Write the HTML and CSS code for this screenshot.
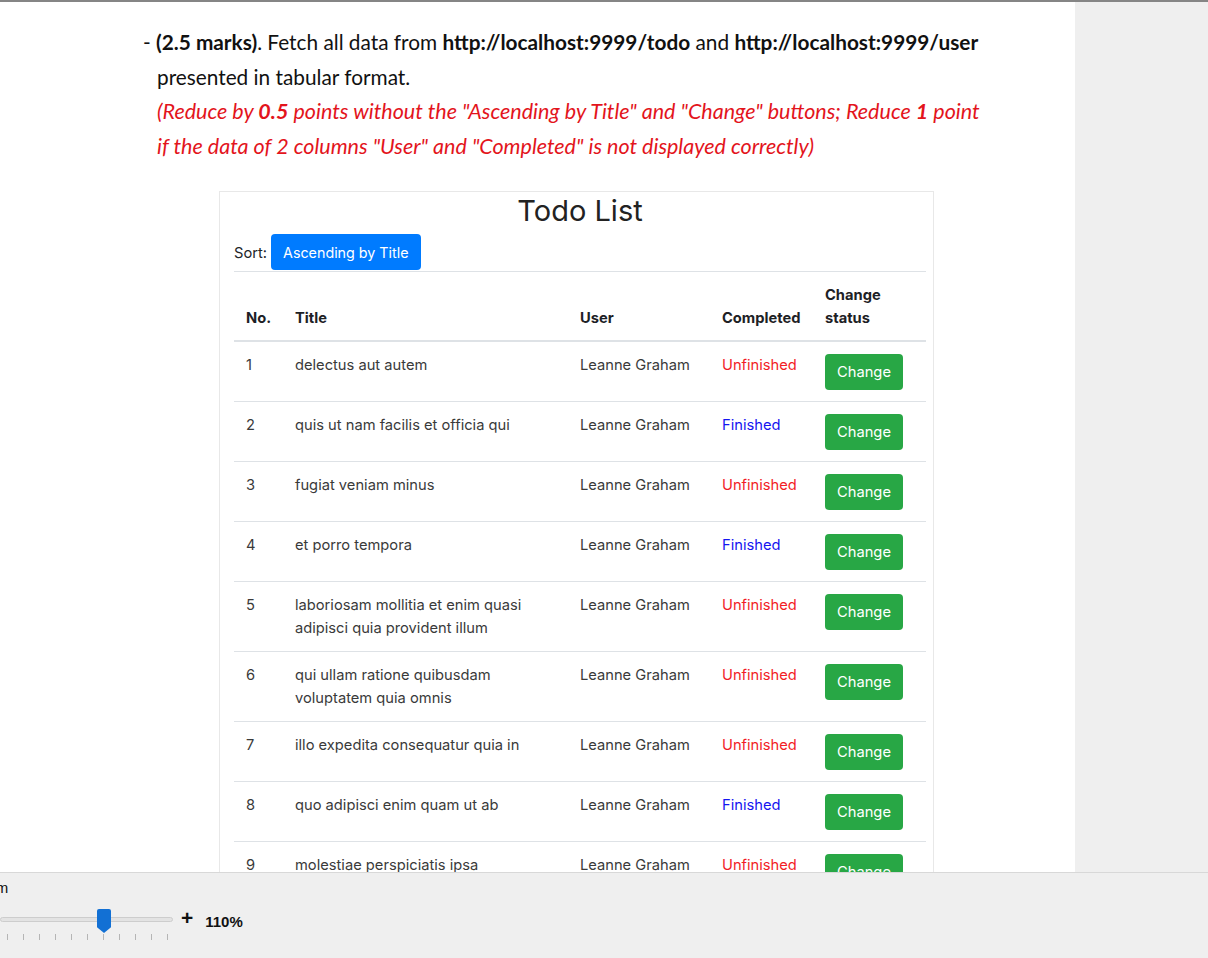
FILE: index.html
```html
<!DOCTYPE html>
<html lang="en">
<head>
<meta charset="utf-8">
<title>Todo List requirement</title>
<link rel="stylesheet" href="styles.css">
</head>
<body>
<div class="app">
  <div class="main">
    <div class="doc">
      <p class="req">
        <span class="line first">- <b>(2.5 marks)</b>. Fetch all data from <b>http://localhost:9999/todo</b> and <b>http://localhost:9999/user</b></span>
        <span class="line">presented in tabular format.</span>
        <span class="line note">(Reduce by <b>0.5</b> points without the "Ascending by Title" and "Change" buttons; Reduce <b>1</b> point</span>
        <span class="line note">if the data of 2 columns "User" and "Completed" is not displayed correctly)</span>
      </p>
      <div class="card">
        <h1 class="title">Todo List</h1>
        <div class="sort">
          <span>Sort:</span>
          <button class="btn btn-blue">Ascending by Title</button>
        </div>
        <table class="todo">
          <colgroup>
            <col class="c-no"><col class="c-title"><col class="c-user"><col class="c-done"><col class="c-act">
          </colgroup>
          <thead>
            <tr><th>No.</th><th>Title</th><th>User</th><th>Completed</th><th>Change status</th></tr>
          </thead>
          <tbody>
            <tr><td>1</td><td>delectus aut autem</td><td>Leanne Graham</td><td class="no">Unfinished</td><td><button class="btn btn-green">Change</button></td></tr>
            <tr><td>2</td><td>quis ut nam facilis et officia qui</td><td>Leanne Graham</td><td class="yes">Finished</td><td><button class="btn btn-green">Change</button></td></tr>
            <tr><td>3</td><td>fugiat veniam minus</td><td>Leanne Graham</td><td class="no">Unfinished</td><td><button class="btn btn-green">Change</button></td></tr>
            <tr><td>4</td><td>et porro tempora</td><td>Leanne Graham</td><td class="yes">Finished</td><td><button class="btn btn-green">Change</button></td></tr>
            <tr><td>5</td><td>laboriosam mollitia et enim quasi adipisci quia provident illum</td><td>Leanne Graham</td><td class="no">Unfinished</td><td><button class="btn btn-green">Change</button></td></tr>
            <tr><td>6</td><td>qui ullam ratione quibusdam voluptatem quia omnis</td><td>Leanne Graham</td><td class="no">Unfinished</td><td><button class="btn btn-green">Change</button></td></tr>
            <tr><td>7</td><td>illo expedita consequatur quia in</td><td>Leanne Graham</td><td class="no">Unfinished</td><td><button class="btn btn-green">Change</button></td></tr>
            <tr><td>8</td><td>quo adipisci enim quam ut ab</td><td>Leanne Graham</td><td class="yes">Finished</td><td><button class="btn btn-green">Change</button></td></tr>
            <tr><td>9</td><td>molestiae perspiciatis ipsa</td><td>Leanne Graham</td><td class="no">Unfinished</td><td><button class="btn btn-green">Change</button></td></tr>
          </tbody>
        </table>
      </div>
    </div>
    <div class="side"></div>
  </div>
  <div class="zoombar">
    <div class="zlabel">Zoom</div>
    <div class="zrow">
      <div class="track"><div class="thumb"></div></div>
      <span class="plus">+</span>
      <span class="pct">110%</span>
    </div>
    <div class="ticks">
      <i></i><i></i><i></i><i></i><i></i><i></i><i></i><i></i><i></i><i></i><i></i>
    </div>
  </div>
</div>
</body>
</html>
```

FILE: styles.css
```css
* { box-sizing: border-box; }
html, body { margin: 0; padding: 0; }
body { width: 1208px; height: 958px; overflow: hidden; background: #fff; }

.app { display: flex; flex-direction: column; height: 958px; }

.main {
  height: 872px;
  display: flex;
  overflow: hidden;
  border-top: 2px solid #858585;
}
.doc { width: 1075px; flex: none; background: #fff; }
.side { flex: 1; background: #efefef; }

.req {
  margin: 0;
  padding: 22px 0 0 157px;
  font-family: Lato, "Open Sans", sans-serif;
  font-size: 20.8px;
  line-height: 35px;
  color: #111;
}
.req .line { display: block; white-space: nowrap; }
.req .first { margin-left: -14px; }
.req b { font-weight: 700; }
.req .note { color: #e3141c; font-style: italic; font-size: 21.5px; }

.card {
  margin: 27px 0 0 219px;
  width: 715px;
  border: 1px solid #e8e8e8;
  border-bottom: none;
  padding: 0 7px 0 14px;
  font-family: Inter, "Open Sans", sans-serif;
  color: #212529;
}
.title {
  margin: 0 0 4px;
  text-align: center;
  font-size: 29px;
  font-weight: 400;
  line-height: 38px;
  color: #222;
}
.sort {
  display: flex;
  align-items: center;
  gap: 4px;
  font-size: 14.7px;
  height: 36px;
  border-bottom: 1px solid #dee2e6;
  box-sizing: content-box;
  padding-bottom: 1px;
}
.sort span { margin-top: 1px; }
.btn {
  font-family: Inter, "Open Sans", sans-serif;
  font-size: 14.7px;
  border: none;
  border-radius: 4px;
  color: #fff;
  height: 36px;
  padding: 0 12px;
  line-height: 37px;
  white-space: nowrap;
}
.btn-blue { background: #007bff; padding: 0 12px; font-size: 14.3px; }
.btn-green { background: #28a745; width: 78px; padding: 0; }

.todo {
  width: 692px;
  table-layout: fixed;
  border-collapse: collapse;
  font-size: 14.7px;
  line-height: 23px;
}
.c-no { width: 49px; }
.c-title { width: 285px; }
.c-user { width: 142px; }
.c-done { width: 103px; }
.c-act { width: 113px; }
.todo th {
  text-align: left;
  vertical-align: bottom;
  font-weight: 700;
  padding: 12px 12px 10px;
  border-bottom: 2px solid #dee2e6;
  color: #1d2125;
}
.todo td {
  vertical-align: top;
  padding: 12px 12px 11px;
  border-top: 1px solid #dee2e6;
  color: #3a3a3a;
}
.todo td.no { color: #f21d26; }
.todo td.yes { color: #1515f0; }

.zoombar {
  flex: 1;
  background: #efefef;
  border-top: 1px solid #d8d8d8;
  overflow: hidden;
  font-family: "Liberation Sans", Arial, sans-serif;
  color: #111;
}
.zlabel {
  margin: 6px 0 0 -30px;
  font-size: 15px;
  line-height: 18px;
}
.zrow {
  display: flex;
  align-items: center;
  height: 24px;
  margin-top: 12px;
}
.track {
  position: relative;
  width: 173px;
  height: 5px;
  background: #e3e3e3;
  border: 1px solid #cdcdcd;
  border-radius: 3px;
  margin-top: -3px;
}
.thumb {
  position: absolute;
  left: 96px;
  top: -9px;
  width: 14px;
  height: 24px;
  background: #1270d4;
  border-radius: 2px 2px 0 0;
  clip-path: polygon(0 0, 100% 0, 100% 76%, 50% 100%, 0 76%);
}
.plus {
  margin-left: 8px;
  font-size: 21px;
  font-weight: 700;
  line-height: 20px;
  margin-top: -6px;
}
.pct {
  margin-left: 12px;
  font-size: 15px;
  font-weight: 700;
}
.ticks {
  display: flex;
  gap: 15px;
  padding-left: 7px;
  margin-top: 1px;
}
.ticks i { display: block; width: 1px; height: 6px; background: #b5b5b5; }
```
